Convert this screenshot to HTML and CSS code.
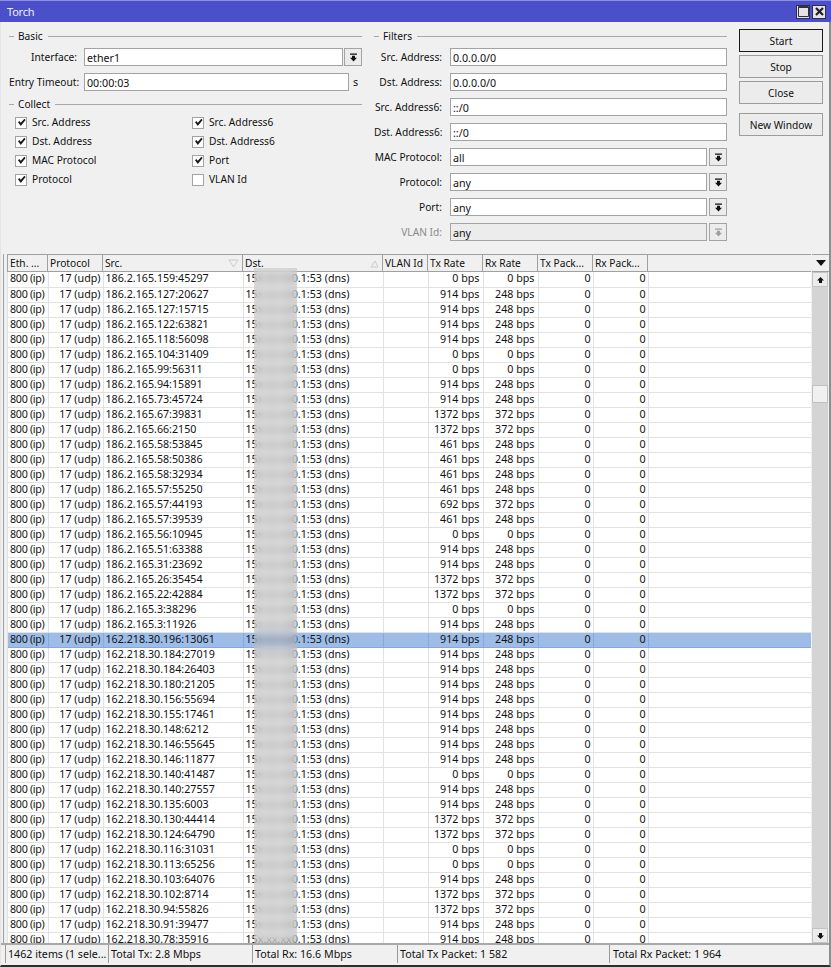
FILE: index.html
```html
<!DOCTYPE html>
<html lang="en">
<head>
<meta charset="utf-8">
<title>Torch</title>
<link rel="stylesheet" href="styles.css">
</head>
<body>
<svg class="defs" width="0" height="0" aria-hidden="true">
  <symbol id="dd" viewBox="0 0 9 9"><path d="M1 0.5h7v1.2H1zM3 2.8h3v2h2L4.500 8.500 1 4.800h2z"/></symbol>
  <symbol id="ck" viewBox="0 0 9 9"><path d="M1 4.200l1.300-1.200 1.500 1.700L7.400 0.800 8.600 2 3.800 8z"/></symbol>
</svg>
<div class="window">
  <header class="titlebar">
    <span class="title">Torch</span>
    <span class="winbtns">
      <span class="winbtn"><svg width="13" height="13" viewBox="0 0 13 13"><path d="M1.500 1.500h10v10h-10z" fill="none" stroke="#333" stroke-width="1"/><path d="M1.500 2.500h10" stroke="#333" stroke-width="1"/></svg></span>
      <span class="winbtn"><svg width="13" height="13" viewBox="0 0 13 13"><path d="M3 3l7 7M10 3l-7 7" stroke="#222" stroke-width="2.200" fill="none"/></svg></span>
    </span>
  </header>
  <section class="panel">
    <div class="col-left">
      <div class="legend"><i class="dash"></i><span>Basic</span><i class="rule"></i></div>
      <div class="field first"><label>Interface:</label><span class="input grow">ether1</span><span class="ddbtn"><svg><use href="#dd"/></svg></span></div>
      <div class="field"><label>Entry Timeout:</label><span class="input grow">00:00:03</span><span class="unit">s</span></div>
      <div class="legend collect"><i class="dash"></i><span>Collect</span><i class="rule"></i></div>
      <div class="checks">
        <div class="check"><span class="box"><svg><use href="#ck"/></svg></span>Src. Address</div>
        <div class="check"><span class="box"><svg><use href="#ck"/></svg></span>Src. Address6</div>
        <div class="check"><span class="box"><svg><use href="#ck"/></svg></span>Dst. Address</div>
        <div class="check"><span class="box"><svg><use href="#ck"/></svg></span>Dst. Address6</div>
        <div class="check"><span class="box"><svg><use href="#ck"/></svg></span>MAC Protocol</div>
        <div class="check"><span class="box"><svg><use href="#ck"/></svg></span>Port</div>
        <div class="check"><span class="box"><svg><use href="#ck"/></svg></span>Protocol</div>
        <div class="check"><span class="box"></span>VLAN Id</div>
      </div>
    </div>
    <div class="col-mid">
      <div class="legend"><i class="dash"></i><span>Filters</span><i class="rule"></i></div>
      <div class="field first"><label>Src. Address:</label><span class="input grow">0.0.0.0/0</span></div>
      <div class="field"><label>Dst. Address:</label><span class="input grow">0.0.0.0/0</span></div>
      <div class="field"><label>Src. Address6:</label><span class="input grow">::/0</span></div>
      <div class="field"><label>Dst. Address6:</label><span class="input grow">::/0</span></div>
      <div class="field"><label>MAC Protocol:</label><span class="input grow">all</span><span class="ddbtn"><svg><use href="#dd"/></svg></span></div>
      <div class="field"><label>Protocol:</label><span class="input grow">any</span><span class="ddbtn"><svg><use href="#dd"/></svg></span></div>
      <div class="field"><label>Port:</label><span class="input grow">any</span><span class="ddbtn"><svg><use href="#dd"/></svg></span></div>
      <div class="field off"><label>VLAN Id:</label><span class="input grow">any</span><span class="ddbtn"><svg><use href="#dd"/></svg></span></div>
    </div>
    <div class="col-btns">
      <span class="btn default">Start</span>
      <span class="btn">Stop</span>
      <span class="btn">Close</span>
      <span class="btn newwin">New Window</span>
    </div>
  </section>
  <section class="list">
    <div class="grid-wrap">
      <div class="thead">
        <span class="th">Eth. ...</span><span class="th">Protocol</span><span class="th sort">Src.<svg class="arrow" width="11" height="9" viewBox="0 0 11 9"><path d="M1 1h9L5.500 8z" fill="none" stroke="#ccc"/></svg></span><span class="th sort">Dst.<svg class="arrow" width="9" height="9" viewBox="0 0 9 9"><path d="M1 8h7L5 2z" fill="none" stroke="#ccc"/></svg></span><span class="th">VLAN Id</span><span class="th">Tx Rate</span><span class="th">Rx Rate</span><span class="th">Tx Pack...</span><span class="th">Rx Pack...</span>
      </div>
      <div class="tbody">
        <table>
          <tbody>
            <tr><td>800 (ip)</td><td>17 (udp)</td><td>186.2.165.159:45297</td><td>15x.xx.xx0.1:53 (dns)</td><td></td><td>0 bps</td><td>0 bps</td><td>0</td><td>0</td><td></td></tr>
            <tr><td>800 (ip)</td><td>17 (udp)</td><td>186.2.165.127:20627</td><td>15x.xx.xx0.1:53 (dns)</td><td></td><td>914 bps</td><td>248 bps</td><td>0</td><td>0</td><td></td></tr>
            <tr><td>800 (ip)</td><td>17 (udp)</td><td>186.2.165.127:15715</td><td>15x.xx.xx0.1:53 (dns)</td><td></td><td>914 bps</td><td>248 bps</td><td>0</td><td>0</td><td></td></tr>
            <tr><td>800 (ip)</td><td>17 (udp)</td><td>186.2.165.122:63821</td><td>15x.xx.xx0.1:53 (dns)</td><td></td><td>914 bps</td><td>248 bps</td><td>0</td><td>0</td><td></td></tr>
            <tr><td>800 (ip)</td><td>17 (udp)</td><td>186.2.165.118:56098</td><td>15x.xx.xx0.1:53 (dns)</td><td></td><td>914 bps</td><td>248 bps</td><td>0</td><td>0</td><td></td></tr>
            <tr><td>800 (ip)</td><td>17 (udp)</td><td>186.2.165.104:31409</td><td>15x.xx.xx0.1:53 (dns)</td><td></td><td>0 bps</td><td>0 bps</td><td>0</td><td>0</td><td></td></tr>
            <tr><td>800 (ip)</td><td>17 (udp)</td><td>186.2.165.99:56311</td><td>15x.xx.xx0.1:53 (dns)</td><td></td><td>0 bps</td><td>0 bps</td><td>0</td><td>0</td><td></td></tr>
            <tr><td>800 (ip)</td><td>17 (udp)</td><td>186.2.165.94:15891</td><td>15x.xx.xx0.1:53 (dns)</td><td></td><td>914 bps</td><td>248 bps</td><td>0</td><td>0</td><td></td></tr>
            <tr><td>800 (ip)</td><td>17 (udp)</td><td>186.2.165.73:45724</td><td>15x.xx.xx0.1:53 (dns)</td><td></td><td>914 bps</td><td>248 bps</td><td>0</td><td>0</td><td></td></tr>
            <tr><td>800 (ip)</td><td>17 (udp)</td><td>186.2.165.67:39831</td><td>15x.xx.xx0.1:53 (dns)</td><td></td><td>1372 bps</td><td>372 bps</td><td>0</td><td>0</td><td></td></tr>
            <tr><td>800 (ip)</td><td>17 (udp)</td><td>186.2.165.66:2150</td><td>15x.xx.xx0.1:53 (dns)</td><td></td><td>1372 bps</td><td>372 bps</td><td>0</td><td>0</td><td></td></tr>
            <tr><td>800 (ip)</td><td>17 (udp)</td><td>186.2.165.58:53845</td><td>15x.xx.xx0.1:53 (dns)</td><td></td><td>461 bps</td><td>248 bps</td><td>0</td><td>0</td><td></td></tr>
            <tr><td>800 (ip)</td><td>17 (udp)</td><td>186.2.165.58:50386</td><td>15x.xx.xx0.1:53 (dns)</td><td></td><td>461 bps</td><td>248 bps</td><td>0</td><td>0</td><td></td></tr>
            <tr><td>800 (ip)</td><td>17 (udp)</td><td>186.2.165.58:32934</td><td>15x.xx.xx0.1:53 (dns)</td><td></td><td>461 bps</td><td>248 bps</td><td>0</td><td>0</td><td></td></tr>
            <tr><td>800 (ip)</td><td>17 (udp)</td><td>186.2.165.57:55250</td><td>15x.xx.xx0.1:53 (dns)</td><td></td><td>461 bps</td><td>248 bps</td><td>0</td><td>0</td><td></td></tr>
            <tr><td>800 (ip)</td><td>17 (udp)</td><td>186.2.165.57:44193</td><td>15x.xx.xx0.1:53 (dns)</td><td></td><td>692 bps</td><td>372 bps</td><td>0</td><td>0</td><td></td></tr>
            <tr><td>800 (ip)</td><td>17 (udp)</td><td>186.2.165.57:39539</td><td>15x.xx.xx0.1:53 (dns)</td><td></td><td>461 bps</td><td>248 bps</td><td>0</td><td>0</td><td></td></tr>
            <tr><td>800 (ip)</td><td>17 (udp)</td><td>186.2.165.56:10945</td><td>15x.xx.xx0.1:53 (dns)</td><td></td><td>0 bps</td><td>0 bps</td><td>0</td><td>0</td><td></td></tr>
            <tr><td>800 (ip)</td><td>17 (udp)</td><td>186.2.165.51:63388</td><td>15x.xx.xx0.1:53 (dns)</td><td></td><td>914 bps</td><td>248 bps</td><td>0</td><td>0</td><td></td></tr>
            <tr><td>800 (ip)</td><td>17 (udp)</td><td>186.2.165.31:23692</td><td>15x.xx.xx0.1:53 (dns)</td><td></td><td>914 bps</td><td>248 bps</td><td>0</td><td>0</td><td></td></tr>
            <tr><td>800 (ip)</td><td>17 (udp)</td><td>186.2.165.26:35454</td><td>15x.xx.xx0.1:53 (dns)</td><td></td><td>1372 bps</td><td>372 bps</td><td>0</td><td>0</td><td></td></tr>
            <tr><td>800 (ip)</td><td>17 (udp)</td><td>186.2.165.22:42884</td><td>15x.xx.xx0.1:53 (dns)</td><td></td><td>1372 bps</td><td>372 bps</td><td>0</td><td>0</td><td></td></tr>
            <tr><td>800 (ip)</td><td>17 (udp)</td><td>186.2.165.3:38296</td><td>15x.xx.xx0.1:53 (dns)</td><td></td><td>0 bps</td><td>0 bps</td><td>0</td><td>0</td><td></td></tr>
            <tr><td>800 (ip)</td><td>17 (udp)</td><td>186.2.165.3:11926</td><td>15x.xx.xx0.1:53 (dns)</td><td></td><td>914 bps</td><td>248 bps</td><td>0</td><td>0</td><td></td></tr>
            <tr class="selected"><td>800 (ip)</td><td>17 (udp)</td><td>162.218.30.196:13061</td><td>15x.xx.xx0.1:53 (dns)</td><td></td><td>914 bps</td><td>248 bps</td><td>0</td><td>0</td><td></td></tr>
            <tr><td>800 (ip)</td><td>17 (udp)</td><td>162.218.30.184:27019</td><td>15x.xx.xx0.1:53 (dns)</td><td></td><td>914 bps</td><td>248 bps</td><td>0</td><td>0</td><td></td></tr>
            <tr><td>800 (ip)</td><td>17 (udp)</td><td>162.218.30.184:26403</td><td>15x.xx.xx0.1:53 (dns)</td><td></td><td>914 bps</td><td>248 bps</td><td>0</td><td>0</td><td></td></tr>
            <tr><td>800 (ip)</td><td>17 (udp)</td><td>162.218.30.180:21205</td><td>15x.xx.xx0.1:53 (dns)</td><td></td><td>914 bps</td><td>248 bps</td><td>0</td><td>0</td><td></td></tr>
            <tr><td>800 (ip)</td><td>17 (udp)</td><td>162.218.30.156:55694</td><td>15x.xx.xx0.1:53 (dns)</td><td></td><td>914 bps</td><td>248 bps</td><td>0</td><td>0</td><td></td></tr>
            <tr><td>800 (ip)</td><td>17 (udp)</td><td>162.218.30.155:17461</td><td>15x.xx.xx0.1:53 (dns)</td><td></td><td>914 bps</td><td>248 bps</td><td>0</td><td>0</td><td></td></tr>
            <tr><td>800 (ip)</td><td>17 (udp)</td><td>162.218.30.148:6212</td><td>15x.xx.xx0.1:53 (dns)</td><td></td><td>914 bps</td><td>248 bps</td><td>0</td><td>0</td><td></td></tr>
            <tr><td>800 (ip)</td><td>17 (udp)</td><td>162.218.30.146:55645</td><td>15x.xx.xx0.1:53 (dns)</td><td></td><td>914 bps</td><td>248 bps</td><td>0</td><td>0</td><td></td></tr>
            <tr><td>800 (ip)</td><td>17 (udp)</td><td>162.218.30.146:11877</td><td>15x.xx.xx0.1:53 (dns)</td><td></td><td>914 bps</td><td>248 bps</td><td>0</td><td>0</td><td></td></tr>
            <tr><td>800 (ip)</td><td>17 (udp)</td><td>162.218.30.140:41487</td><td>15x.xx.xx0.1:53 (dns)</td><td></td><td>0 bps</td><td>0 bps</td><td>0</td><td>0</td><td></td></tr>
            <tr><td>800 (ip)</td><td>17 (udp)</td><td>162.218.30.140:27557</td><td>15x.xx.xx0.1:53 (dns)</td><td></td><td>914 bps</td><td>248 bps</td><td>0</td><td>0</td><td></td></tr>
            <tr><td>800 (ip)</td><td>17 (udp)</td><td>162.218.30.135:6003</td><td>15x.xx.xx0.1:53 (dns)</td><td></td><td>914 bps</td><td>248 bps</td><td>0</td><td>0</td><td></td></tr>
            <tr><td>800 (ip)</td><td>17 (udp)</td><td>162.218.30.130:44414</td><td>15x.xx.xx0.1:53 (dns)</td><td></td><td>1372 bps</td><td>372 bps</td><td>0</td><td>0</td><td></td></tr>
            <tr><td>800 (ip)</td><td>17 (udp)</td><td>162.218.30.124:64790</td><td>15x.xx.xx0.1:53 (dns)</td><td></td><td>1372 bps</td><td>372 bps</td><td>0</td><td>0</td><td></td></tr>
            <tr><td>800 (ip)</td><td>17 (udp)</td><td>162.218.30.116:31031</td><td>15x.xx.xx0.1:53 (dns)</td><td></td><td>0 bps</td><td>0 bps</td><td>0</td><td>0</td><td></td></tr>
            <tr><td>800 (ip)</td><td>17 (udp)</td><td>162.218.30.113:65256</td><td>15x.xx.xx0.1:53 (dns)</td><td></td><td>0 bps</td><td>0 bps</td><td>0</td><td>0</td><td></td></tr>
            <tr><td>800 (ip)</td><td>17 (udp)</td><td>162.218.30.103:64076</td><td>15x.xx.xx0.1:53 (dns)</td><td></td><td>914 bps</td><td>248 bps</td><td>0</td><td>0</td><td></td></tr>
            <tr><td>800 (ip)</td><td>17 (udp)</td><td>162.218.30.102:8714</td><td>15x.xx.xx0.1:53 (dns)</td><td></td><td>1372 bps</td><td>372 bps</td><td>0</td><td>0</td><td></td></tr>
            <tr><td>800 (ip)</td><td>17 (udp)</td><td>162.218.30.94:55826</td><td>15x.xx.xx0.1:53 (dns)</td><td></td><td>1372 bps</td><td>372 bps</td><td>0</td><td>0</td><td></td></tr>
            <tr><td>800 (ip)</td><td>17 (udp)</td><td>162.218.30.91:39477</td><td>15x.xx.xx0.1:53 (dns)</td><td></td><td>914 bps</td><td>248 bps</td><td>0</td><td>0</td><td></td></tr>
            <tr><td>800 (ip)</td><td>17 (udp)</td><td>162.218.30.78:35916</td><td>15x.xx.xx0.1:53 (dns)</td><td></td><td>914 bps</td><td>248 bps</td><td>0</td><td>0</td><td></td></tr>
          </tbody>
        </table>
      </div>
    </div>
    <div class="scrollcol">
      <span class="menu-arrow"><svg width="10" height="6" viewBox="0 0 10 6"><path d="M0 0h10L5 6z"/></svg></span>
      <div class="scrollbar">
        <span class="sb-btn"><svg width="7" height="6" viewBox="0 0 7 6"><path d="M3.500 0L7 3.500H5V6H2V3.500H0z"/></svg></span>
        <div class="sb-track"><span class="sb-thumb"></span></div>
        <span class="sb-btn"><svg width="7" height="6" viewBox="0 0 7 6"><path d="M3.500 6L7 2.500H5V0H2V2.500H0z"/></svg></span>
      </div>
    </div>
    <div class="blur"></div>
  </section>
  <footer class="status">
    <span class="seg s1">1462 items (1 sele...</span>
    <span class="seg s2">Total Tx: 2.8 Mbps</span>
    <span class="seg s3">Total Rx: 16.6 Mbps</span>
    <span class="seg s4">Total Tx Packet: 1 582</span>
    <span class="seg s5">Total Rx Packet: 1 964</span>
  </footer>
</div>
</body>
</html>
```

FILE: styles.css
```css
* { box-sizing: border-box; }
html, body { margin: 0; padding: 0; background: #fff; }
body { width: 831px; height: 967px; overflow: hidden; font: 10.7px/15px "Noto Sans", "Liberation Sans", sans-serif; color: #111; }
.defs { position: absolute; }
.window { width: 831px; height: 967px; display: flex; flex-direction: column; background: #f0f0f0; border-left: 1px solid #e4e4e4; border-right: 2px solid #8e8e8e; border-bottom: 2px solid #2e2e2e; }

.titlebar { height: 22px; flex: none; margin: 0 -2px 0 -1px; padding: 0 5px 0 7px; background: #4c4fca; border-top: 1px solid #8f91de; display: flex; align-items: center; justify-content: space-between; }
.title { color: #eef; font-size: 11px; letter-spacing: -.2px; line-height: 22px; }
.winbtns { display: flex; gap: 2px; }
.winbtn { width: 14px; height: 14px; background: #e4e4e4; border: 1px solid #2c2c5c; display: flex; align-items: center; justify-content: center; }
.winbtn svg { flex: none; }

.panel { height: 232px; flex: none; display: flex; padding: 7px 0 0 8px; }
.col-left { width: 353px; flex: none; }
.col-mid { width: 353px; flex: none; margin-left: 12px; }
.col-btns { width: 84px; flex: none; margin-left: 12px; display: flex; flex-direction: column; gap: 3px; }

.legend { height: 15px; display: flex; align-items: center; gap: 4px; font-size: 10.2px; }
.legend .dash { width: 5px; height: 1px; background: #a8a8a8; flex: none; }
.legend .rule { flex: 1; height: 1px; background: #a8a8a8; margin-left: 1px; }
.legend.collect { margin-top: 6px; }

.field { display: flex; align-items: center; height: 18px; margin-top: 7px; }
.field.first { margin-top: 4px; }
.field label { flex: none; width: 68px; margin-right: 7px; padding-top: 1px; text-align: right; white-space: nowrap; font-size: 10.2px; }
.col-mid .field label { width: 68px; margin-right: 8px; }
.input { height: 18px; line-height: 18px; padding: 0 2px; background: #fff; border: 1px solid #a3a3a3; white-space: nowrap; }
.grow { flex: 1; min-width: 0; }
.ddbtn { flex: none; width: 18px; height: 18px; margin-left: 2px; background: #ececec; border: 1px solid #a3a3a3; display: flex; align-items: center; justify-content: center; }
.col-left .ddbtn { margin-left: 1px; }
.ddbtn svg { width: 9px; height: 9px; fill: #111; }
.unit { flex: none; width: 13px; padding: 1px 0 0 4px; }
.off label { color: #8a8a8a; }
.off .input { background: #ececec; }
.off .ddbtn svg { fill: #a0a0a0; }

.checks { display: grid; grid-template-columns: 177px 1fr; grid-auto-rows: 19px; margin-top: 1px; padding-left: 6px; }
.check { display: flex; align-items: center; gap: 5px; white-space: nowrap; font-size: 10.2px; }
.box { width: 12px; height: 12px; flex: none; background: #fff; border: 1px solid #a3a3a3; display: flex; align-items: center; justify-content: center; }
.box svg { width: 9px; height: 9px; fill: #1a1a1a; }

.btn { height: 23px; line-height: 23px; text-align: center; background: #ececec; border: 1px solid #9c9c9c; white-space: nowrap; font-size: 10.2px; }
.btn.default { border-color: #1a1a1a; }
.btn.newwin { margin-top: 6px; }

.list { height: 689px; flex: none; position: relative; display: flex; padding-left: 2px; }
.grid-wrap { width: 808px; flex: none; border-left: 1px solid #a0a0a0; padding-left: 3px; display: flex; flex-direction: column; }
.thead { height: 18px; flex: none; display: flex; background: #f0f0f0; border-top: 1px solid #a0a0a0; border-bottom: 1px solid #a0a0a0; border-left: 1px solid #a0a0a0; }
.th { flex: none; height: 16px; line-height: 16px; padding-left: 2px; border-right: 1px solid #a0a0a0; position: relative; white-space: nowrap; font-size: 10.2px; }
.th:nth-child(1) { width: 40px; }
.th:nth-child(2) { width: 55px; }
.th:nth-child(3), .th:nth-child(4) { width: 140px; }
.th:nth-child(5) { width: 45px; }
.th:nth-child(n+6) { width: 55px; }
.arrow { position: absolute; right: 3px; top: 4px; }

.tbody { flex: 1; overflow: hidden; background: #fff; border-left: 1px solid #e2e2e2; }
table { border-collapse: collapse; table-layout: fixed; width: 804px; }
td { height: 15px; padding: 0 3px 1px 1px; line-height: 13px; border-right: 1px solid #e2e2e2; border-bottom: 1px solid #e2e2e2; white-space: nowrap; overflow: hidden; }
td:nth-child(1) { width: 40px; padding-left: 2px; letter-spacing: -.3px; }
td:nth-child(2) { width: 55px; text-align: right; padding-right: 2px; }
td:nth-child(3) { width: 140px; padding-left: 2px; }
td:nth-child(4) { width: 140px; padding-left: 2px; }
td:nth-child(5) { width: 45px; }
td:nth-child(n+6):nth-child(-n+7) { width: 55px; text-align: right; }
td:nth-child(n+8):nth-child(-n+9) { width: 55px; text-align: right; padding-right: 2px; }
td:nth-child(10) { border-right: 0; }
.selected td { background: #9dbde8; border-bottom-color: #88a8d8; border-right-color: #88a8d8; }

.scrollcol { width: 18px; flex: none; display: flex; flex-direction: column; margin-left: 0; padding-left: 1px; }
.menu-arrow { height: 18px; flex: none; display: flex; align-items: center; justify-content: center; border-top: 1px solid #a0a0a0; border-bottom: 1px solid #a0a0a0; }
.menu-arrow svg { fill: #111; }
.scrollbar { flex: 1; display: flex; flex-direction: column; width: 16px; }
.sb-btn { flex: none; height: 15px; background: #ececec; border: 1px solid #c4c4c4; display: flex; align-items: center; justify-content: center; }
.sb-btn svg { fill: #111; }
.sb-track { flex: 1; background: #d4d4d4; padding-top: 98px; }
.sb-thumb { display: block; height: 18px; background: #f0f0f0; border: 1px solid #c0c0c0; }

.blur { position: absolute; left: 253px; top: 14px; width: 43px; height: 675px; background: rgba(190,190,190,.45); backdrop-filter: blur(4px); }

.status { flex: 1; display: flex; align-items: flex-start; padding-left: 4px; border-top: 2px solid #a8a8a8; }
.seg { flex: none; height: 18px; line-height: 19px; padding-left: 2px; border-left: 1px solid #9a9a9a; white-space: nowrap; }
.s1 { width: 103px; }
.s2 { width: 144px; }
.s3 { width: 145px; }
.s4 { width: 212px; }
.s5 { width: 218px; padding-left: 3px; }
```
